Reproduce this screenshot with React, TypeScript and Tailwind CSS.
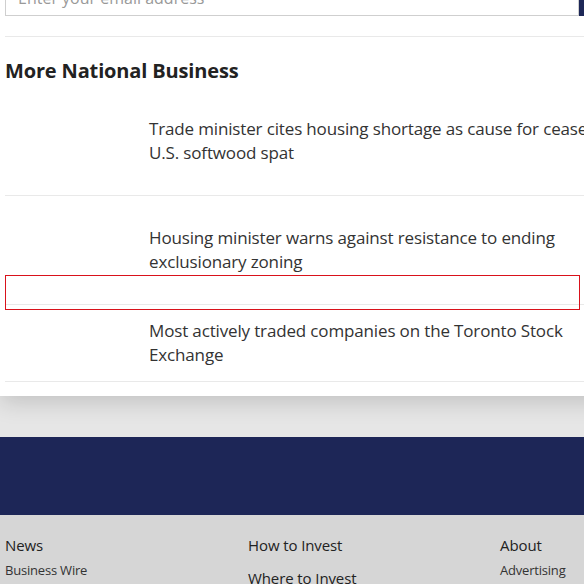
import React from 'react';

type ArticleProps = {
  lines: string[];
  className: string;
};

const Article = ({ lines, className }: ArticleProps) => (
  <div className={`flex border-b border-[#e9e9e9] ${className}`}>
    <div className="w-[144px] shrink-0" />
    <p className="text-[17px] leading-[24px] tracking-[-0.15px] text-[#333]">
      {lines.map((l) => (
        <span key={l} className="block whitespace-nowrap">
          {l}
        </span>
      ))}
    </p>
  </div>
);

const FooterCol = ({ title, links, extra, width }: { title: string; links: string[]; extra?: string; width: string }) => (
  <div className={`${width} shrink-0`}>
    <h4 className="text-[15px] leading-[22px] font-medium tracking-[-0.1px] text-[#222]">{title}</h4>
    <ul className="mt-[4px]">
      {links.map((l) => (
        <li key={l} className="text-[13px] leading-[20px] tracking-[-0.2px] text-[#333]">
          {l}
        </li>
      ))}
    </ul>
    {extra && <h4 className="mt-[11px] text-[15px] leading-[22px] font-medium tracking-[-0.1px] text-[#222]">{extra}</h4>}
  </div>
);

export default function App() {
  return (
    <div className="w-[584px] h-[584px] overflow-hidden bg-[#e6e6e6] font-['Open_Sans',sans-serif]">
      <div className="relative z-10 w-[700px] bg-white pl-[5px] pb-[14px] shadow-[0_6px_22px_rgba(0,0,0,0.16)]">
        <div className="-mt-[21px] flex h-[37px]">
          <div className="flex w-[574px] items-center border border-[#cfcfcf] pl-[12px] text-[16px] text-[#999]">
            Enter your email address
          </div>
          <div className="w-[40px] bg-[#1d2757]" />
        </div>
        <div className="mt-[20px] border-t border-[#e9e9e9]" />
        <h2 className="mt-[20px] text-[20px] leading-[28px] font-bold tracking-[-0.15px] text-[#222]">
          More National Business
        </h2>
        <Article
          className="pt-[32px] pb-[30px]"
          lines={['Trade minister cites housing shortage as cause for ceasefire in', 'U.S. softwood spat']}
        />
        <div className="relative">
          <Article
            className="pt-[30px] pb-[30px]"
            lines={['Housing minister warns against resistance to ending', 'exclusionary zoning']}
          />
          <div className="absolute left-0 top-[79px] h-[35px] w-[575px] border border-[#d9121b]" />
        </div>
        <Article
          className="pt-[14px] pb-[14px]"
          lines={['Most actively traded companies on the Toronto Stock', 'Exchange']}
        />
      </div>
      <div className="h-[41px]" />
      <div className="h-[78px] bg-[#1d2657]" />
      <div className="flex h-[200px] bg-[#d6d6d6] pl-[5px] pt-[19px]">
        <FooterCol width="w-[243px]" title="News" links={['Business Wire', 'Canada']} />
        <FooterCol width="w-[252px]" title="How to Invest" links={[]} extra="Where to Invest" />
        <FooterCol width="w-[100px]" title="About" links={['Advertising', 'About Us']} />
      </div>
    </div>
  );
}
